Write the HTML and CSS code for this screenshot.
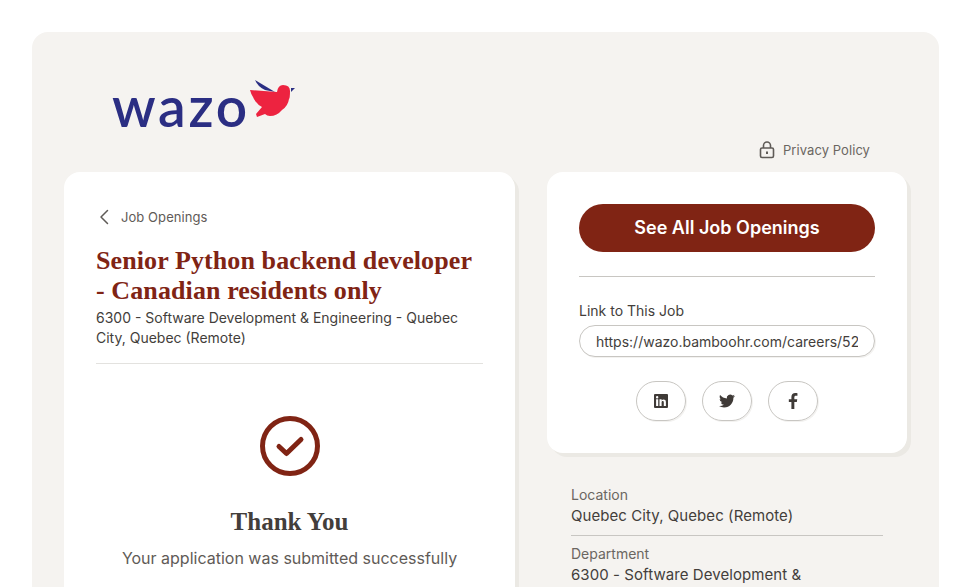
FILE: index.html
```html
<!DOCTYPE html>
<html lang="en">
  <head>
    <meta charset="UTF-8" />
    <meta name="viewport" content="width=device-width, initial-scale=1.0" />
    <title>Senior Python backend developer - Wazo</title>
    <link rel="stylesheet" href="styles.css">
  </head>
  <body>
    <div class="panel">
      <header class="header">
        <div class="logo">
          <span class="logo-text">wazo</span>
          <svg class="logo-bird" viewBox="0 0 46 40" width="46" height="40">
            <path fill="#2b2e83" d="M5 0 L25 12 L15 10 Q8 7 5 0 Z" />
            <path fill="#2b2e83" d="M41 8 L45 8 L41 12 Z" />
            <path fill="#ed2340" d="M0 10 L27 12 Q28 5 33 5 Q40 5 40 11 Q40 18 39 19 Q38 26 32 30 Q27 36 20 36 Q17 36 15 34 L7 37 L6 34 L12 27 Q8 25 7 23 Q4 20 3 17 Q1 14 0 10 Z" />
          </svg>
        </div>
        <a class="privacy" href="#">
          <svg viewBox="0 0 16 18" width="16" height="18" fill="none" stroke="#5f5b57" stroke-width="1.600">
            <rect x="1.500" y="7" width="13" height="9.500" rx="1.500" />
            <path d="M4.500 7 V4.500 a3.500 3.500 0 0 1 7 0 V7" />
            <path d="M8 10.500 V13" stroke-width="2" />
          </svg>
          Privacy Policy
        </a>
      </header>

      <div class="columns">
        <main class="card job-card">
          <a class="back" href="#">
            <svg viewBox="0 0 10 16" width="10" height="16" fill="none" stroke="#5f5b57" stroke-width="1.500" stroke-linecap="round" stroke-linejoin="round">
              <path d="M8.500 1.500 L2 8 L8.500 14.500" />
            </svg>
            Job Openings
          </a>
          <h1 class="job-title">Senior Python backend developer - Canadian residents only</h1>
          <p class="job-sub">6300 - Software Development &amp; Engineering - Quebec City, Quebec (Remote)</p>
          <hr class="rule" />
          <div class="thanks">
            <svg viewBox="0 0 60 60" width="60" height="60" fill="none" stroke="#802414" stroke-linecap="round" stroke-linejoin="round">
              <circle cx="30" cy="30" r="27.500" stroke-width="5" />
              <path d="M19 30.500 L26.500 37.500 L41 23.500" stroke-width="5" />
            </svg>
            <h2 class="thanks-title">Thank You</h2>
            <p class="thanks-text">Your application was submitted successfully</p>
          </div>
        </main>

        <aside class="side">
          <div class="card share-card">
            <a class="all-jobs" href="#">See All Job Openings</a>
            <hr class="rule rule-dark" />
            <label class="link-label" for="jobLink">Link to This Job</label>
            <input class="link-input" id="jobLink" type="text" value="https://wazo.bamboohr.com/careers/52" readonly />
            <div class="socials">
              <a class="social" href="#" aria-label="LinkedIn">
                <svg viewBox="0 0 14 14" width="14" height="14">
                  <path fill="#3f3a37" fill-rule="evenodd" d="M1 0 H13 a1 1 0 0 1 1 1 V13 a1 1 0 0 1 -1 1 H1 a1 1 0 0 1 -1 -1 V1 a1 1 0 0 1 1 -1 Z M2.100 5.300 V12 H4.200 V5.300 Z M3.150 2 a1.200 1.200 0 1 0 0 2.400 a1.200 1.200 0 1 0 0 -2.400 Z M5.500 5.300 V12 H7.600 V8.500 C7.600 6.700 9.800 6.600 9.800 8.500 V12 H11.900 V7.900 C11.900 4.800 8.600 4.900 7.600 6.400 V5.300 Z" />
                </svg>
              </a>
              <a class="social" href="#" aria-label="Twitter">
                <svg viewBox="0 0 24 24" width="16" height="16">
                  <path fill="#3f3a37" d="M23.950 4.570a10 10 0 0 1-2.820.77 4.960 4.960 0 0 0 2.160-2.720 9.900 9.900 0 0 1-3.120 1.180 4.920 4.920 0 0 0-8.380 4.480C7.690 8.100 4.070 6.130 1.640 3.160a4.820 4.820 0 0 0-.66 2.470c0 1.710.87 3.210 2.190 4.100a4.900 4.900 0 0 1-2.230-.62v.06a4.920 4.920 0 0 0 3.950 4.830 5 5 0 0 1-2.210.08 4.940 4.940 0 0 0 4.600 3.420A9.870 9.870 0 0 1 0 19.540a14 14 0 0 0 7.560 2.210c9.050 0 14-7.500 14-13.980 0-.21 0-.42-.02-.63a9.940 9.940 0 0 0 2.410-2.570z" />
                </svg>
              </a>
              <a class="social" href="#" aria-label="Facebook">
                <svg viewBox="0 0 10 18" width="10" height="16">
                  <path fill="#3f3a37" d="M6.500 18 V10 H9.300 L9.800 7 H6.500 V5 C6.500 4 7 3.200 8.300 3.200 H10 V0.300 C9.500 0.200 8.500 0 7.500 0 C5 0 3.200 1.600 3.200 4.500 V7 H0.300 V10 H3.200 V18 Z" />
                </svg>
              </a>
            </div>
          </div>

          <dl class="facts">
            <div class="fact">
              <dt>Location</dt>
              <dd>Quebec City, Quebec (Remote)</dd>
            </div>
            <div class="fact">
              <dt>Department</dt>
              <dd>6300 - Software Development &amp; Engineering</dd>
            </div>
          </dl>
        </aside>
      </div>
    </div>
  </body>
</html>
```

FILE: styles.css
```css
html,
body {
  height: 100%;
  overflow: hidden;
}
body {
  margin: 0;
  padding: 32px 32px 0;
  box-sizing: border-box;
  background-color: white;
  font-family: Inter, "Liberation Sans", sans-serif;
  color: #433e3b;
}
a {
  color: inherit;
  text-decoration: none;
}
.panel {
  background-color: #f5f3f0;
  border-radius: 16px;
  padding: 48px 32px 32px;
}
.header {
  display: flex;
  flex-direction: column;
  margin-bottom: 12px;
}
.logo {
  display: flex;
  align-items: flex-start;
  height: 50px;
  padding-left: 48px;
  margin-bottom: 10px;
}
.logo-text {
  font-family: Lato, sans-serif;
  font-size: 55px;
  font-weight: 600;
  line-height: 50px;
  letter-spacing: 2.750px;
  color: #2b2e83;
  margin-top: 1px;
}
.logo-bird {
  margin-left: 0;
}
.privacy {
  display: flex;
  align-items: center;
  align-self: flex-end;
  gap: 8px;
  margin-right: 37px;
  font-size: 13px;
  line-height: 20px;
  letter-spacing: 0.07px;
  color: #6b6661;
}
.columns {
  display: flex;
  gap: 32px;
  align-items: flex-start;
}
.card {
  background-color: white;
  border-radius: 16px;
  box-shadow: 4px 4px 0 #ebe9e4;
  box-sizing: border-box;
  padding: 32px;
}
.job-card {
  width: 451px;
  flex-shrink: 0;
}
.back {
  display: flex;
  align-items: center;
  gap: 12px;
  padding-left: 3px;
  font-size: 13px;
  line-height: 26px;
  letter-spacing: 0.07px;
  color: #5f5b57;
}
.job-title {
  margin: 16px 0 0;
  font-family: "Liberation Serif", serif;
  font-size: 26px;
  font-weight: 700;
  line-height: 30px;
  letter-spacing: 0.1px;
  color: #802414;
}
.job-sub {
  margin: 2px 0 0;
  font-size: 14px;
  line-height: 20px;
}
.rule {
  border: none;
  border-top: 1px solid #e3e2df;
  margin: 15px 0 0;
}
.thanks {
  display: flex;
  flex-direction: column;
  align-items: center;
  padding-top: 52px;
}
.thanks-title {
  margin: 30px 0 0;
  font-family: "Liberation Serif", serif;
  font-size: 25px;
  font-weight: 700;
  line-height: 32px;
  color: #433e3b;
}
.thanks-text {
  margin: 8px 0 0;
  font-size: 16px;
  line-height: 24px;
  color: #5f5b57;
}
.side {
  width: 360px;
  flex-shrink: 0;
}
.share-card {
  display: flex;
  flex-direction: column;
  height: 281px;
}
.all-jobs {
  background-color: #802414;
  color: white;
  border-radius: 24px;
  font-size: 18px;
  font-weight: 600;
  line-height: 48px;
  text-align: center;
}
.rule-dark {
  width: 100%;
  border-top-color: #c8c6c2;
  margin: 24px 0 0;
}
.link-label {
  margin-top: 24px;
  font-size: 14px;
  line-height: 20px;
}
.link-input {
  margin-top: 4px;
  height: 32px;
  box-sizing: border-box;
  padding: 0 16px;
  border: 1px solid #c8c6c2;
  border-radius: 16px;
  box-shadow: 1px 1px 0 #f3f2f0;
  font-family: inherit;
  font-size: 14px;
  color: #433e3b;
  outline: none;
}
.socials {
  display: flex;
  justify-content: center;
  gap: 16px;
  margin-top: 24px;
}
.social {
  display: flex;
  align-items: center;
  justify-content: center;
  width: 50px;
  height: 40px;
  box-sizing: border-box;
  border: 1px solid #c8c6c2;
  border-radius: 20px;
  box-shadow: 1px 1px 0 #f3f2f0;
}
.facts {
  margin: 32px 24px 0;
}
.fact {
  padding-bottom: 9px;
  margin-bottom: 8px;
  border-bottom: 1px solid #c8c6c2;
}
.fact dt {
  font-size: 14px;
  line-height: 20px;
  color: #6b6661;
}
.fact dd {
  margin: 1px 0 0;
  font-size: 15px;
  line-height: 20px;
  letter-spacing: 0.07px;
}
```
